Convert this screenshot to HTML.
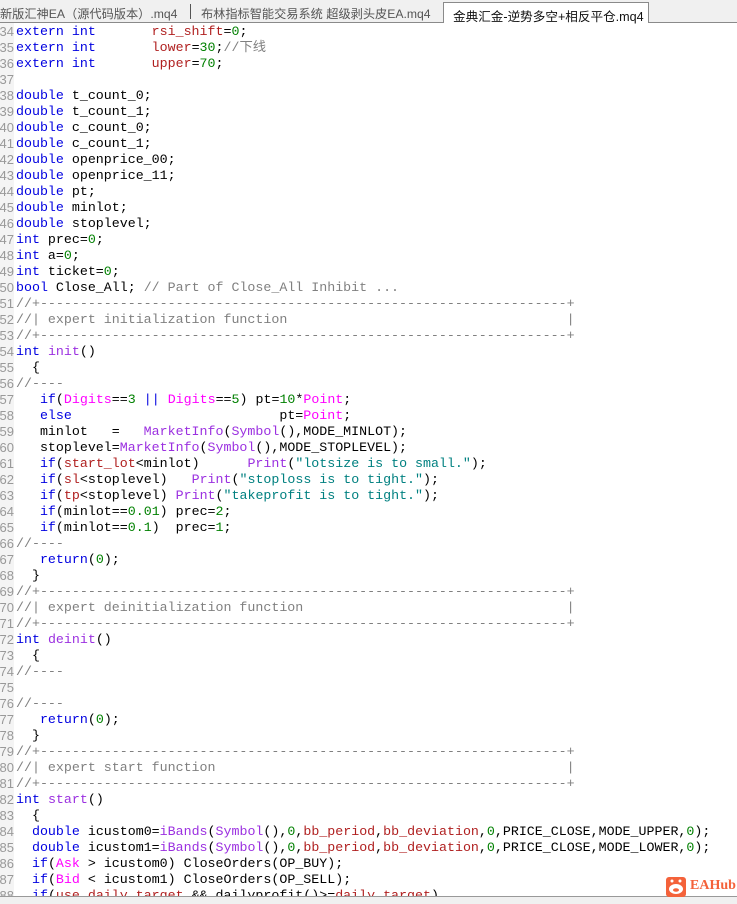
<!DOCTYPE html>
<html><head><meta charset="utf-8"><style>
body{margin:0;width:737px;height:903px;overflow:hidden;background:#fff;position:relative;font-family:"Liberation Mono","Noto Sans CJK SC",monospace;}
#tabs{position:absolute;left:0;top:0;width:737px;height:22px;background:#f0f0f0;border-bottom:1px solid #8a8a8a;font-family:"Liberation Sans","Noto Sans CJK SC",sans-serif;font-size:12.2px;color:#555;}
.tab{position:absolute;top:4px;white-space:nowrap;}
#act{position:absolute;left:443px;top:2px;width:206px;height:21px;background:#fff;border:1px solid #8a8a8a;border-bottom:none;color:#111;font-size:12.6px;box-sizing:border-box;padding:3px 0 0 9px;white-space:nowrap;}
#gut{position:absolute;left:0;top:23px;width:14px;height:880px;background:#f4f4f4;}
.ln{position:absolute;left:0;height:16px;line-height:16px;font-size:13.3px;white-space:pre;width:737px;}
.nb{position:absolute;left:0;top:0;width:14px;height:16px;overflow:hidden;}
.n{position:absolute;right:0;color:#999;font-family:"Liberation Sans",sans-serif;font-size:13px;}
.c{position:absolute;left:16px;color:#000;}
.k{color:#0000e0}.v{color:#b02020}.d{color:#008000}.cm{color:#808080}.f{color:#9b30e0}.p{color:#ff00ff}.s{color:#008080}
#bot{position:absolute;left:0;top:896px;width:737px;height:7px;background:#f0f0f0;border-top:1px solid #999;}
#logo{position:absolute;left:666px;top:877px;width:20px;height:20px;background:#f4623a;border-radius:3px;}
#logot{position:absolute;left:690px;top:878px;color:#f4623a;font-family:"Liberation Serif",serif;font-weight:bold;font-size:14px;}
</style></head><body>
<div id="tabs">
<span class="tab" style="left:0">新版汇神EA（源代码版本）.mq4</span>
<span style="position:absolute;left:190px;top:4px;width:1px;height:15px;background:#555"></span>
<span class="tab" style="left:201px">布林指标智能交易系统 超级剥头皮EA.mq4</span>
<div id="act">金典汇金-逆势多空+相反平仓.mq4</div>
</div>
<div id="gut"></div>
<div id="code"></div>
<script>
var L=[
'<span class="k">extern int</span>       <span class="v">rsi_shift</span>=<span class="d">0</span>;',
'<span class="k">extern int</span>       <span class="v">lower</span>=<span class="d">30</span>;<span class="cm">//下线</span>',
'<span class="k">extern int</span>       <span class="v">upper</span>=<span class="d">70</span>;',
'',
'<span class="k">double</span> t_count_0;',
'<span class="k">double</span> t_count_1;',
'<span class="k">double</span> c_count_0;',
'<span class="k">double</span> c_count_1;',
'<span class="k">double</span> openprice_00;',
'<span class="k">double</span> openprice_11;',
'<span class="k">double</span> pt;',
'<span class="k">double</span> minlot;',
'<span class="k">double</span> stoplevel;',
'<span class="k">int</span> prec=<span class="d">0</span>;',
'<span class="k">int</span> a=<span class="d">0</span>;',
'<span class="k">int</span> ticket=<span class="d">0</span>;',
'<span class="k">bool</span> Close_All; <span class="cm">// Part of Close_All Inhibit ...</span>',
'B','E:expert initialization function','B',
'<span class="k">int</span> <span class="f">init</span>()',
'  {',
'<span class="cm">//----</span>',
'   <span class="k">if</span>(<span class="p">Digits</span>==<span class="d">3</span> <span class="k">||</span> <span class="p">Digits</span>==<span class="d">5</span>) pt=<span class="d">10</span>*<span class="p">Point</span>;',
'   <span class="k">else</span>                          pt=<span class="p">Point</span>;',
'   minlot   =   <span class="f">MarketInfo</span>(<span class="f">Symbol</span>(),MODE_MINLOT);',
'   stoplevel=<span class="f">MarketInfo</span>(<span class="f">Symbol</span>(),MODE_STOPLEVEL);',
'   <span class="k">if</span>(<span class="v">start_lot</span>&lt;minlot)      <span class="f">Print</span>(<span class="s">"lotsize is to small."</span>);',
'   <span class="k">if</span>(<span class="v">sl</span>&lt;stoplevel)   <span class="f">Print</span>(<span class="s">"stoploss is to tight."</span>);',
'   <span class="k">if</span>(<span class="v">tp</span>&lt;stoplevel) <span class="f">Print</span>(<span class="s">"takeprofit is to tight."</span>);',
'   <span class="k">if</span>(minlot==<span class="d">0.01</span>) prec=<span class="d">2</span>;',
'   <span class="k">if</span>(minlot==<span class="d">0.1</span>)  prec=<span class="d">1</span>;',
'<span class="cm">//----</span>',
'   <span class="k">return</span>(<span class="d">0</span>);',
'  }',
'B','E:expert deinitialization function','B',
'<span class="k">int</span> <span class="f">deinit</span>()',
'  {',
'<span class="cm">//----</span>',
'',
'<span class="cm">//----</span>',
'   <span class="k">return</span>(<span class="d">0</span>);',
'  }',
'B','E:expert start function','B',
'<span class="k">int</span> <span class="f">start</span>()',
'  {',
'  <span class="k">double</span> icustom0=<span class="f">iBands</span>(<span class="f">Symbol</span>(),<span class="d">0</span>,<span class="v">bb_period</span>,<span class="v">bb_deviation</span>,<span class="d">0</span>,PRICE_CLOSE,MODE_UPPER,<span class="d">0</span>);',
'  <span class="k">double</span> icustom1=<span class="f">iBands</span>(<span class="f">Symbol</span>(),<span class="d">0</span>,<span class="v">bb_period</span>,<span class="v">bb_deviation</span>,<span class="d">0</span>,PRICE_CLOSE,MODE_LOWER,<span class="d">0</span>);',
'  <span class="k">if</span>(<span class="p">Ask</span> &gt; icustom0) CloseOrders(OP_BUY);',
'  <span class="k">if</span>(<span class="p">Bid</span> &lt; icustom1) CloseOrders(OP_SELL);',
'  <span class="k">if</span>(<span class="v">use_daily_target</span> &amp;&amp; dailyprofit()&gt;=<span class="v">daily_target</span>)'
];
var h='';
for(var i=0;i<L.length;i++){
 var s=L[i];
 if(s=='B') s='<span class="cm">//+'+'-'.repeat(66)+'+</span>';
 else if(s.indexOf('E:')==0){var t='//| '+s.slice(2);s='<span class="cm">'+t+' '.repeat(69-t.length)+'|</span>';}
 h+='<div class="ln" style="top:'+(24+16*i)+'px"><div class="nb"><span class="n">'+(34+i)+'</span></div><span class="c">'+s+'</span></div>';
}
document.getElementById('code').innerHTML=h;
</script>
<div id="bot"></div>
<div id="logo"><svg width="20" height="20" viewBox="0 0 20 20"><ellipse cx="10" cy="12" rx="7" ry="5" fill="#fff"/><circle cx="6" cy="4" r="1.5" fill="#fff"/><circle cx="14" cy="4" r="1.5" fill="#fff"/><ellipse cx="10" cy="13" rx="3" ry="1.8" fill="#f4623a"/></svg></div>
<div id="logot">EAHub</div>
</body></html>
